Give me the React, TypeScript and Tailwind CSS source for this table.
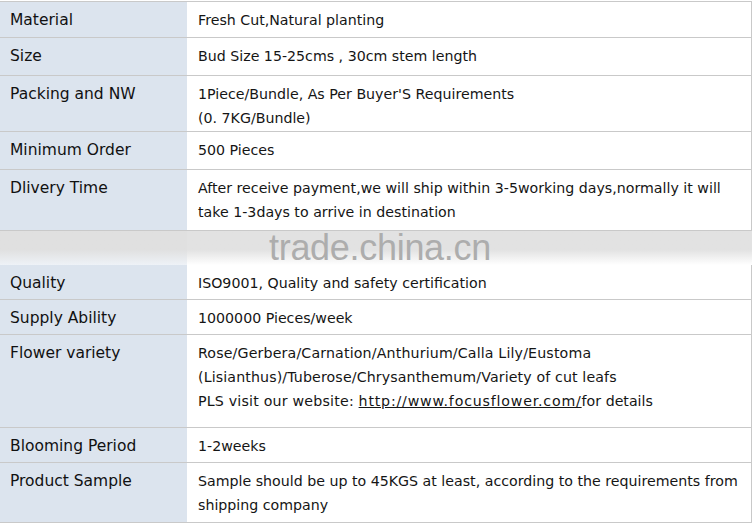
const rows1: { label: string; h: string; lines: React.ReactNode[] }[] = [
  { label: "Material", h: "h-[36px]", lines: ["Fresh Cut,Natural planting"] },
  { label: "Size", h: "h-[38px]", lines: ["Bud Size 15-25cms , 30cm stem length"] },
  {
    label: "Packing and NW",
    h: "h-[56px]",
    lines: ["1Piece/Bundle, As Per Buyer'S Requirements", "(0. 7KG/Bundle)"],
  },
  { label: "Minimum Order", h: "h-[38px]", lines: ["500 Pieces"] },
  {
    label: "Dlivery Time",
    h: "h-[61px]",
    lines: [
      "After receive payment,we will ship within 3-5working days,normally it will",
      "take 1-3days to arrive in destination",
    ],
  },
];

const rows2: { label: string; h: string; lines: React.ReactNode[] }[] = [
  { label: "Quality", h: "h-[35px]", lines: ["ISO9001, Quality and safety certification"] },
  { label: "Supply Ability", h: "h-[35px]", lines: ["1000000 Pieces/week"] },
  {
    label: "Flower variety",
    h: "h-[93px]",
    lines: [
      <span className="tracking-[0.15px]">Rose/Gerbera/Carnation/Anthurium/Calla Lily/Eustoma</span>,
      <span className="tracking-[0.12px]">(Lisianthus)/Tuberose/Chrysanthemum/Variety of cut leafs</span>,
      <>
        <span className="tracking-[0.2px]">PLS visit our website: </span>
        <span className="underline tracking-[0.8px]">http://www.focusflower.com/</span>for details
      </>,
    ],
  },
  { label: "Blooming Period", h: "h-[35px]", lines: ["1-2weeks"] },
  {
    label: "Product Sample",
    h: "h-[60px]",
    lines: [
      "Sample should be up to 45KGS at least, according to the requirements from",
      "shipping company",
    ],
  },
];

function Row({ label, h, lines }: { label: string; h: string; lines: React.ReactNode[] }) {
  return (
    <div className={`flex border-b border-[#c9c9c9] ${h}`}>
      <div className="w-[187px] shrink-0 bg-[#dce4ee] pl-[10px] pt-[6px] text-[15.5px] leading-[24px] text-[#111]">
        {label}
      </div>
      <div className="flex-1 bg-white pl-[11px] pt-[6px] text-[14.2px] leading-[24px] text-[#151515] border-r border-[#c9c9c9]">
        {lines.map((l, i) => (
          <div key={i} className="whitespace-nowrap">{l}</div>
        ))}
      </div>
    </div>
  );
}

export default function App() {
  return (
    <div className="w-[755px] h-[526px] bg-white overflow-hidden font-['DejaVu_Sans',sans-serif]">
      <div className="relative w-[752px] pt-[1px]">
        <div className="border-t border-[#c9c9c9]">
          {rows1.map((r) => (
            <Row key={r.label} {...r} />
          ))}
        </div>
        <div className="flex h-[34px]">
          <div className="w-[187px] bg-linear-to-b from-[#e0e0e0] from-55% to-[#eef2f7]" />
          <div className="flex-1 bg-linear-to-b from-[#e2e2e2] from-55% to-white" />
        </div>
        <div>
          {rows2.map((r) => (
            <Row key={r.label} {...r} />
          ))}
        </div>
        <div className="absolute left-[269px] top-[230px] text-[36px] leading-none text-[#adadad] font-['Liberation_Sans',Arial,sans-serif] tracking-[-0.3px]">
          trade.china.cn
        </div>
      </div>
    </div>
  );
}
